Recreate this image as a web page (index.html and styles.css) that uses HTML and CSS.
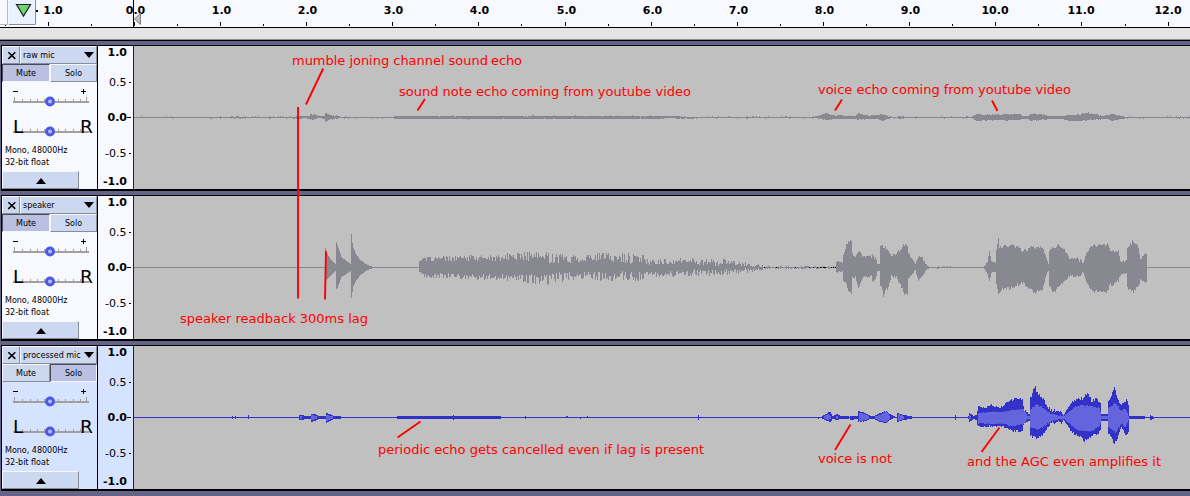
FILE: index.html
```html
<!DOCTYPE html>
<html lang="en">
<head>
<meta charset="utf-8">
<title>Audio tracks</title>
<link rel="stylesheet" href="styles.css">
</head>
<body>
<svg class="defs" width="0" height="0">
  <symbol id="close" viewBox="0 0 17 17"><path d="M6.300 6.300l7 6.600M13.300 6.300l-7 6.600" stroke="#000" stroke-width="1.500"/></symbol>
  <symbol id="sliders" viewBox="0 0 95 60">
    <g fill="#a0a0a0">
      <path d="M11 19h76v2H11zM11 49h76v2H11z"/>
      <path d="M12 15h1v4h-1zM20 17h1v2h-1zM28 17h1v2h-1zM35 17h1v2h-1zM42 17h1v2h-1zM56 17h1v2h-1zM63 17h1v2h-1zM71 17h1v2h-1zM78 17h1v2h-1zM84 15h1v4h-1z"/>
      <path d="M20 47h1v2h-1zM28 47h1v2h-1zM35 47h1v2h-1zM42 47h1v2h-1zM56 47h1v2h-1zM63 47h1v2h-1zM71 47h1v2h-1zM78 47h1v2h-1z"/>
    </g>
    <path d="M11 9.500h5M79 9.500h5M81.500 7v5" stroke="#000" fill="none"/>
    <g fill="#b4bce8" stroke="#4c58e8" stroke-width="3"><circle cx="48" cy="19.500" r="3.500"/><circle cx="48" cy="49.500" r="3.500"/></g>
  </symbol>
  <symbol id="scale" viewBox="0 0 35 143">
    <path d="M31 36h2v1h-2zM29 71h4v1h-4zM31 107h2v1h-2z"/>
  </symbol>
</svg>

<main class="window">
  <header class="ruler">
    <svg width="1190" height="27" viewBox="0 0 1190 27">
      <g id="ruler-ticks"></g>
      <path d="M7.500 0v24.500M0 24.500h8" stroke="#bbb" fill="none"/>
      <rect x="9" y="0" width="26" height="24" fill="#ebf2ff"/>
      <path d="M9 24.500h26.500V0" stroke="#888c98" fill="none"/>
      <path d="M16.500 4.500h14L23.500 16z" fill="#6fd66f" stroke="#222" stroke-width="1.200"/>
      <path d="M36 10h2v2h-2z"/>
      <path d="M140.500 13.500v11l-6-5.500z" fill="#bdbdbd" stroke="#808080"/>
    </svg>
  </header>
  <div class="strip"></div>

  <section class="track">
    <aside class="panel">
      <div class="titlebar"><button class="btn close"><svg width="17" height="17"><use href="#close"/></svg></button><button class="btn name">raw mic<i class="down"></i></button></div>
      <div class="switches"><button class="btn pressed">Mute</button><button class="btn">Solo</button></div>
      <svg class="sliders" width="95" height="60"><use href="#sliders"/></svg>
      <p class="format">Mono, 48000Hz<br>32-bit float</p>
      <button class="btn collapse"><i class="up"></i></button>
    </aside>
    <svg class="scale" width="35" height="143"><use href="#scale"/></svg>
    <svg class="wave" id="raw" width="1057" height="143" viewBox="133 0 1057 143" shape-rendering="crispEdges"></svg>
  </section>

  <section class="track">
    <aside class="panel">
      <div class="titlebar"><button class="btn close"><svg width="17" height="17"><use href="#close"/></svg></button><button class="btn name">speaker<i class="down"></i></button></div>
      <div class="switches"><button class="btn pressed">Mute</button><button class="btn">Solo</button></div>
      <svg class="sliders" width="95" height="60"><use href="#sliders"/></svg>
      <p class="format">Mono, 48000Hz<br>32-bit float</p>
      <button class="btn collapse"><i class="up"></i></button>
    </aside>
    <svg class="scale" width="35" height="143"><use href="#scale"/></svg>
    <svg class="wave" id="speaker" width="1057" height="143" viewBox="133 0 1057 143" shape-rendering="crispEdges"></svg>
  </section>

  <section class="track selected">
    <aside class="panel">
      <div class="titlebar"><button class="btn close"><svg width="17" height="17"><use href="#close"/></svg></button><button class="btn name">processed mic<i class="down"></i></button></div>
      <div class="switches"><button class="btn">Mute</button><button class="btn pressed">Solo</button></div>
      <svg class="sliders" width="95" height="60"><use href="#sliders"/></svg>
      <p class="format">Mono, 48000Hz<br>32-bit float</p>
      <button class="btn collapse"><i class="up"></i></button>
    </aside>
    <svg class="scale" width="35" height="143"><use href="#scale"/></svg>
    <svg class="wave" id="processed" width="1057" height="143" viewBox="133 0 1057 143" shape-rendering="crispEdges"></svg>
  </section>

  <svg class="notes" width="1190" height="496" viewBox="0 0 1190 496">
    <g stroke="#f00" stroke-width="1.900" fill="none">
      <path d="M323.200 68.500L306 104.500M298 107v191.500M326 251l-1 48.500M425 99l-7.500 11.500M842 99.500l-7 11M992 100.500l5.500 10.500M420.500 421.500L397.500 437.500M850.500 424.500l-15.500 25.500M999.500 427.500l-18 24.500"/>
    </g>
    <g fill="#f00" font-family="DejaVu Sans" font-size="13">
      <text x="292" y="65" textLength="196">mumble joning channel sound</text>
      <text x="491" y="65" textLength="31">echo</text>
      <text x="399" y="96" textLength="292">sound note echo coming from youtube video</text>
      <text x="818" y="94" textLength="253">voice echo coming from youtube video</text>
      <text x="180" y="323" textLength="188">speaker readback 300ms lag</text>
      <text x="378" y="454" textLength="326">periodic echo gets cancelled even if lag is present</text>
      <text x="818" y="463" textLength="74">voice is not</text>
      <text x="967" y="466" textLength="194">and the AGC even amplifies it</text>
    </g>
  </svg>
</main>
<script src="waves.js"></script>
</body>
</html>
```

FILE: styles.css
```css
* { box-sizing: border-box; }
body { margin: 0; background: #646488; font-family: "DejaVu Sans", sans-serif; }
.defs { position: absolute; }
.window { position: relative; width: 1190px; height: 496px; overflow: hidden; }
.ruler { height: 28px; background: #f8f9ff; border-bottom: 1px solid #000; }
.ruler svg { display: block; }
.ruler text { font: bold 11px "DejaVu Sans", sans-serif; text-anchor: middle; }
.strip { height: 13px; margin-bottom: 4px; background: #e4e4e4; border-bottom: 1px solid #000; box-shadow: inset 0 -1px #8c8c90; }

.track { display: flex; height: 146px; margin: 0 0 4px 1px; border: solid #000; border-width: 1px 0 2px 1px; }
.panel { display: flex; flex-direction: column; width: 96px; background: #f8f9ff; border-right: 1px solid #000; }
.selected .panel, .selected .scale { background: #d5e3ff; }
.scale { display: block; flex: none; background: #f8f9ff; }
.scale text { font: 11px "DejaVu Sans", sans-serif; text-anchor: end; }
.scale .major { font-weight: bold; }
.wave { display: block; flex: none; background: #c0c0c0; }

.titlebar { display: flex; height: 18px; }
.switches { display: grid; grid-template-columns: 48px 47px; height: 18px; }
.btn { margin: 0; padding: 1px 0 0; border: solid; border-width: 1px; border-color: #f6f8ff #888c98 #888c98 #f6f8ff; border-radius: 0; background: #ccd8f0; color: #000; font: 8px/14px "DejaVu Sans", sans-serif; }
.pressed { background: #b9c0e2; border-color: #4c4c54 #f6f8ff #f6f8ff #4c4c54; }
.close { width: 18px; padding: 0; }
.close svg { display: block; width: 17px; height: 17px; margin: -1px 0 0 -1px; }
.name { display: flex; align-items: center; justify-content: space-between; width: 77px; padding: 2px 2px 0 2px; white-space: nowrap; }
.down { margin-top: -3px; border: solid transparent; border-width: 6px 5.5px 0; border-top-color: #000; }
.up { border: solid transparent; border-width: 0 5.5px 6px; border-bottom-color: #000; }
.sliders { display: block; flex: none; height: 60px; }
.sliders text { font: 18.5px "DejaVu Sans", sans-serif; }
.format { flex: none; height: 29px; margin: 0; padding: 3px 0 0 3px; font-size: 8px; line-height: 12px; }
.collapse { display: flex; align-items: center; justify-content: center; width: 77px; height: 18px; padding-top: 2px; }
.notes { position: absolute; inset: 0; }
```

FILE: waves.js
```js
const NS = 'http://www.w3.org/2000/svg';
const CENTER = 71;

function add(parent, name, attrs, text) {
  const el = document.createElementNS(NS, name);
  for (const key in attrs) el.setAttribute(key, attrs[key]);
  if (text) el.textContent = text;
  parent.appendChild(el);
}

function makeNoise(seed) {
  let s = seed;
  return () => {
    s = (s * 1664525 + 1013904223) >>> 0;
    return s / 4294967296;
  };
}

// Keys are [x, amplitude above, amplitude below, jitter].
// A key with zero amplitude holds until the next one.
function envelope(keys, seed) {
  const rnd = makeNoise(seed);
  let d = '';
  for (let i = 0; i < keys.length - 1; i++) {
    const [x0, u0, l0, j] = keys[i];
    const [x1, u1, l1] = keys[i + 1];
    const hold = u0 === 0 && l0 === 0;
    for (let x = x0; x < x1; x++) {
      const t = hold ? 0 : (x - x0) / (x1 - x0);
      const amp = j || 0;
      const up = Math.max(0, Math.round(u0 + (u1 - u0) * t + (rnd() * 2 - 1) * amp));
      const down = Math.max(0, Math.round(l0 + (l1 - l0) * t + (rnd() * 2 - 1) * amp));
      if (up || down) d += `M${x} ${CENTER - up}h1v${up + down + 1}h-1z`;
    }
  }
  return d;
}

function draw(id, color, layers) {
  const svg = document.getElementById(id);
  add(svg, 'rect', { x: 133, y: CENTER, width: 1057, height: 1, fill: color });
  layers.forEach(([keys, fill], i) => add(svg, 'path', { d: envelope(keys, 17 + i), fill }));
  add(svg, 'rect', { x: 133, y: 0, width: 1, height: 143, fill: '#301c1c' });
}

const GRAY = '#888890';
const BLUE = '#3232c8';

draw('raw', GRAY, [[[
  [134,0,0,.65],[180,0,0,0],[210,0,0,.7],[296,1,1,.5],[305,1,0,.4],[309,1,1,.5],[310,3,2,.7],[315,2,1,.4],[320,1,0],[324,1,1],[325,4,4,.5],[329,2,2,.5],[338,1,0],[340,0,0,.6],
  [394,1,1,.15],[430,1,1,.53],[655,1,1,.4],[670,1,0,.5],[690,0,1,.5],[700,0,0,.7],[730,0,0,.65],[815,1,0,.6],[821,2,1,.5],[826,4,2,.5],[832,2,1,.5],[855,1,1],[858,4,2,.5],[868,1,1,.5],
  [878,2,1],[881,3,3,.5],[891,0,0,.7],[898,1,1,.5],[905,0,0,.56],[965,0,0,.8],[973,1,1],[976,3,3,.5],[985,2,2,.6],[1020,3,2,.5],[1023,1,1],[1028,1,1],
  [1030,3,3,.7],[1040,3,2,.6],[1048,1,1,.3],[1062,1,1],[1070,2,3,.7],[1088,4,2,.6],[1103,1,1],[1107,2,1,.5],[1112,3,3,.6],[1120,1,1,.5],[1128,0,0,.7],[1190,0,0]
], GRAY]]);

draw('speaker', GRAY, [[[
  [325,19,13],[326,14,12],[330,8,8],[335,3,3],[336,25,21],[337,22,20],[341,10,9],[346,6,6],[350,3,3],[351,33,30],[352,24,24],[353,19,18],[356,12,12],[360,7,7],[367,2,2],[373,0,0],
  [419,6,4,1],[424,8,7,2.5],[440,8,8,3],[470,9,9,3],[500,9,9,4],[518,11,10,5],[545,10,12,6],[565,8,8,4.500],[600,10,8,5.500],[643,8,8,4],[650,5,7,3],[690,6,5,3.500],
  [730,4,4,2.5],[755,2,2,1.5],[766,0,0,1.1],[800,0,0,1],[836,6,5,1],[842,4,3],[843,12,12,1],[846,22,16,1],[848,26,22,1],[851,26,26,1],[852,14,10,1],
  [855,9,9,1],[858,17,20,2],[861,12,11,2],[870,10,7,3],[873,11,13,2],[876,7,8],[877,3,3],[879,3,3],[880,22,16,2],[883,20,27,2],[888,17,19,1],[891,12,8,2],[896,14,10,2],
  [901,18,19,2],[904,22,26,2],[907,22,26,1],[908,13,11,1],[912,8,6],[915,3,2],[918,11,13,1],[922,9,8,1],[927,1,1],[929,0,0,.7],[955,0,0],
  [984,1,1],[987,5,6],[989,16,13],[991,6,5,1],[995,4,4],[996,17,16],[998,29,26],[999,21,24,2],[1003,20,20,2],[1012,22,20,2],[1022,17,14,2],[1030,19,22,2],
  [1036,20,25,2],[1042,19,21,2],[1045,12,10,1],[1048,3,3],[1049,17,18,1],[1053,20,25,2],[1058,22,19,1],[1064,17,13,1],[1069,9,8,1],[1077,9,9,2],
  [1083,4,5],[1086,14,14,1],[1091,21,22,2],[1097,22,24,1],[1107,22,24,2],[1110,16,17,2],[1118,17,13,1],[1120,6,7,1],[1126,6,5,1],[1127,19,20,2],
  [1133,26,24,1],[1138,20,17,2],[1140,8,11,1],[1145,14,15,1],[1147,12,12]
], GRAY]]);

// Quiet samples around the end of the note.
const quiet = document.getElementById('speaker');
[764, 776, 795, 809, 813, 817, 820, 823, 825, 831, 833, 835].forEach(x =>
  add(quiet, 'rect', { x, y: CENTER, width: x > 818 && x < 824 ? 2 : 1, height: 1, fill: '#000' }));

draw('processed', BLUE, [[[
  [232,1,1],[233,0,0],[235,1,1],[236,0,0],[248,2,1],[249,0,0],[299,2,2],[303,2,2],[304,1,1,.3],[310,1,1],[311,3,4],[314,3,3],[318,1,1],[325,1,1],[326,4,5],[329,3,3],[334,1,1],[340,1,1],[341,0,0],
  [397,1,1,.15],[452,1,1],[453,2,2],[454,1,1,.1],[500,1,1],[501,0,0],[525,1,1],[526,0,0],[566,1,0,.5],[570,0,0],[575,0,0,.7],[588,0,0],[698,2,2],[699,0,0],[818,0,1],[819,0,0],
  [822,1,1],[827,4,3,.5],[830,5,4],[832,1,1],[837,3,2],[840,1,1],[848,1,1],[849,0,0],[850,1,2],[857,1,1],[858,6,4,.5],[865,4,3],[870,1,1],[874,1,1],
  [880,4,4,.5],[886,6,5],[888,4,3],[893,1,0],[896,0,0],[897,4,4],[903,2,2],[910,1,1],[912,0,0],[955,2,2],[956,0,0],[968,1,1],[969,4,4],[973,1,1],
  [976,2,2],[977,6,7],[978,11,9,.7],[985,9,9,1],[991,12,8,1],[1000,9,8,1],[1007,15,11,1.5],[1014,18,13,1.5],[1022,18,13],[1023,11,7],[1024,7,5,1],[1029,3,3],
  [1030,19,18,2],[1035,31,19],[1036,25,21,1],[1043,18,16,2],[1047,11,9,2],[1052,5,4,1],[1054,7,6,2],[1064,3,3],[1066,7,6,1],[1072,15,15,1.5],
  [1078,18,18,2],[1084,20,22,2],[1088,24,22,2],[1091,15,17,2],[1097,19,16,2],[1100,14,12],[1101,3,3,.5],[1107,3,3],[1108,16,15,2],[1114,28,25,2],[1118,18,18,2],
  [1121,12,9,1],[1126,17,18,2],[1128,12,14],[1129,1,1],[1144,1,1],[1145,0,0],[1150,2,2],[1151,1,2],[1154,0,0]
], BLUE], [[
  [300,1,1],[302,0,0],[311,2,2],[315,1,1],[318,0,0],[326,2,3],[330,1,1],[334,0,0],[824,1,1],[828,3,2],[831,0,0],[836,1,1],[839,0,0],[859,4,3],[865,3,2],[869,0,0],
  [875,1,1],[880,2,3],[886,5,4],[890,0,0],[898,3,3],[905,0,0],[969,2,2],[971,0,0],[978,4,5,.6],[991,5,6,.6],[1003,5,6,.6],[1011,7,8,.6],[1023,8,6],[1027,1,1],[1029,1,1],
  [1030,8,9,1],[1036,12,11,1],[1041,10,10,1],[1050,4,4,1],[1055,2,2,.5],[1064,1,1],[1067,4,4,.5],[1074,10,10,.7],[1080,12,13,.7],[1091,11,13,.7],[1099,9,8,.5],
  [1101,1,1],[1107,1,1],[1108,9,9,1],[1115,14,14,1],[1121,6,6,1],[1125,8,9,1],[1129,0,0]
], '#6464dc']]);

// Amplitude labels and balance letters of each track.
document.querySelectorAll('.scale').forEach(svg => {
  [['1.0', 10], ['0.5', 40], ['0.0', 75], ['-0.5', 111], ['-1.0', 139]].forEach(([label, y], i) => {
    const major = i !== 1 && i !== 3;
    add(svg, 'text', { x: major ? 29 : 28.500, y, class: major ? 'major' : 'minor' }, label);
  });
});
document.querySelectorAll('.sliders').forEach(svg => {
  add(svg, 'text', { x: 11, y: 51 }, 'L');
  add(svg, 'text', { x: 78, y: 51 }, 'R');
});

// Timeline ticks every half second, labels every second.
const ruler = document.getElementById('ruler-ticks');
const SECOND = 86.15;
for (let i = -3; i <= 24; i++) {
  const x = Math.floor(134.3 + i * SECOND / 2);
  const whole = i % 2 === 0;
  add(ruler, 'rect', { x, y: whole ? 22 : 24, width: 1, height: whole ? 4 : 2 });
  if (whole) {
    const label = i < 0 ? '1.0' : (i / 2).toFixed(1);
    add(ruler, 'text', { x: i < 0 ? 53 : i / 2 >= 10 ? x : x + 1.500, y: 14 }, label);
  }
}
add(ruler, 'rect', { x: 133, y: 0, width: 1, height: 27 });
```
